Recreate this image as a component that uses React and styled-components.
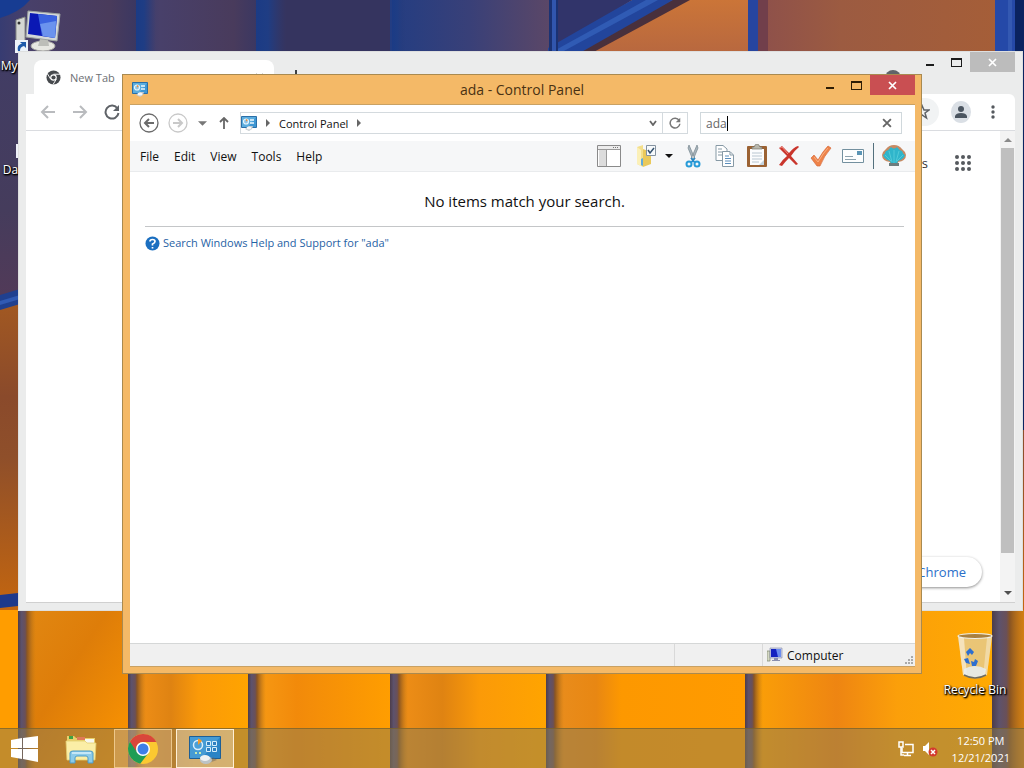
import React, { useState } from "react";
import styled, { createGlobalStyle, css } from "styled-components";

const GlobalStyle = createGlobalStyle`
  * {
    box-sizing: border-box;
  }

  body {
    margin: 0;
    font-family: "Open Sans", "Noto Sans", sans-serif;
    font-size: 12px;
    color: #111;
  }

  button,
  input {
    font: inherit;
    color: inherit;
    border: 0;
    padding: 0;
    margin: 0;
    background: none;
  }

  svg {
    display: block;
    flex: none;
  }
`;

/* ---------- desktop ---------- */

const Desktop = styled.div`
  position: relative;
  height: 100vh;
  overflow: hidden;
  display: flex;
  flex-direction: column;
  background: #3a3762;
`;

const Backdrop = styled.svg`
  position: absolute;
  width: 100%;
  height: 100%;
`;

const Shortcut = styled.button`
  position: absolute;
  width: 76px;
  display: flex;
  flex-direction: column;
  align-items: center;
  gap: 2px;
  line-height: 16px;
  white-space: nowrap;
  color: #fff;
  text-shadow: 1px 1px 2px #000, 0 1px 2px #000, 1px 1px 1px #000;
  left: ${(p) => p.$left || "auto"};
  right: ${(p) => p.$right || "auto"};
  top: ${(p) => p.$top || "auto"};
  bottom: ${(p) => p.$bottom || "auto"};
`;

/* ---------- window parts ---------- */

const CaptionButtons = styled.div`
  display: flex;
  align-items: flex-start;
`;

const CaptionButton = styled.button`
  width: 27px;
  height: 20px;
  display: flex;
  align-items: center;
  justify-content: center;
  color: ${(p) => p.$color || "#1b1b1b"};

  ${(p) =>
    p.$close &&
    css`
      width: 45px;
      color: #fff;
      background: ${p.$close};
    `}
`;

/* ---------- browser window ---------- */

const BrowserWindow = styled.section`
  position: absolute;
  inset: 51px 1px 157px 18px;
  display: flex;
  flex-direction: column;
  padding: 0 7px 7px;
  border: 1px solid #dedfdf;
  background: #ebecec;
`;

const TabStrip = styled.header`
  display: flex;
  align-items: flex-start;
  height: 42px;
  padding-left: 8px;
`;

const Tab = styled.div`
  display: flex;
  align-items: center;
  gap: 9px;
  width: 240px;
  height: 34px;
  margin-top: 8px;
  padding: 0 10px 0 12px;
  border-radius: 8px 8px 0 0;
  background: #fff;
  color: #6d7074;
  font-size: 11px;

  button {
    margin-left: auto;
  }
`;

const NewTabButton = styled.button`
  margin: 18px 0 0 16px;
`;

const TabSearch = styled.button`
  width: 16px;
  height: 16px;
  margin: 18px 15px 0 auto;
  border-radius: 50%;
  background: #5f6368;
`;

const BrowserBar = styled.div`
  display: flex;
  align-items: center;
  gap: 12px;
  height: 37px;
  padding: 0 12px;
  border-bottom: 1px solid #dadce0;
  border-radius: 0 6px 0 0;
  background: #fff;

  > button {
    width: 20px;
    display: flex;
    justify-content: center;
  }
`;

const Omnibox = styled.div`
  flex: 1;
  display: flex;
  align-items: center;
  justify-content: flex-end;
  height: 28px;
  padding-right: 9px;
  border-radius: 14px;
  background: #f1f3f4;
`;

const Avatar = styled.span`
  display: flex;
  align-items: center;
  justify-content: center;
  width: 22px;
  height: 22px;
  border-radius: 50%;
  background: #dadfe5;
`;

const BrowserPage = styled.main`
  flex: 1;
  min-height: 0;
  display: flex;
  background: #fff;
  border-bottom: 1px solid #d0d0d0;
`;

const NewTabPage = styled.div`
  flex: 1;
  display: flex;
  flex-direction: column;
  align-items: flex-end;
  justify-content: space-between;
  padding: 23px 18px 15px;
`;

const PageLinks = styled.nav`
  display: flex;
  align-items: center;
  gap: 26px;
  padding-right: 10px;
  font-size: 13px;

  a {
    color: #333;
    text-decoration: none;
  }
`;

const CustomizeButton = styled.button`
  height: 30px;
  padding: 0 16px 0 20px;
  border-radius: 15px;
  background: #fff;
  box-shadow: 0 1px 3px rgba(0, 0, 0, 0.45);
  color: #2b6fc9;
  font-size: 13px;
`;

const ScrollBar = styled.div`
  width: 15px;
  display: flex;
  flex-direction: column;
  align-items: center;
  justify-content: space-between;
  padding: 5px 0;
  gap: 4px;
  background: #f3f3f3;
`;

const ScrollThumb = styled.div`
  flex: 1;
  width: 13px;
  margin-bottom: 32px;
  background: #bfbfbf;
`;

/* ---------- control panel window ---------- */

const PanelWindow = styled.section`
  position: absolute;
  inset: 74px 102px 94px 122px;
  display: flex;
  flex-direction: column;
  padding: 0 6px 6px 7px;
  border: 1px solid #a98a50;
  background: #f4b967;
`;

const TitleBar = styled.header`
  display: flex;
  justify-content: space-between;
  height: 29px;

  > svg {
    margin: 6px 0 0 2px;
  }
`;

const Title = styled.h1`
  flex: 1;
  margin: 0 0 0 80px;
  font-size: 14px;
  font-weight: 400;
  line-height: 29px;
  text-align: center;
  color: #4a3213;
`;

const PanelBody = styled.div`
  flex: 1;
  min-height: 0;
  display: flex;
  flex-direction: column;
  border: 1px solid #c9a163;
  border-width: 1px 0;
  background: #fff;
`;

const NavRow = styled.div`
  display: flex;
  align-items: center;
  height: 36px;
  padding: 0 13px 0 8px;
`;

const NavButton = styled.button`
  display: flex;
  align-items: center;
  justify-content: center;
  width: ${(p) => p.$width || 22}px;
  height: 22px;
  color: #6f6f6f;
`;

const AddressBar = styled.div`
  flex: 1;
  display: flex;
  align-items: center;
  height: 22px;
  margin-right: 12px;
  border: 1px solid #d4dade;
`;

const Crumbs = styled.div`
  flex: 1;
  display: flex;
  align-items: center;
  gap: 7px;
  font-size: 11px;
`;

const RefreshButton = styled(NavButton)`
  border-left: 1px solid #d4dade;
`;

const SearchBox = styled.label`
  display: flex;
  align-items: center;
  width: 202px;
  height: 22px;
  padding: 0 9px 0 5px;
  border: 1px solid #d0d8dc;
  color: #666;

  input {
    field-sizing: content;
    max-width: 160px;
    outline: none;
    caret-color: transparent;
  }

  button {
    margin-left: auto;
  }
`;

const Caret = styled.span`
  width: 1px;
  height: 15px;
  background: #000;
`;

const MenuRow = styled.div`
  display: flex;
  align-items: center;
  justify-content: space-between;
  height: 31px;
  padding: 0 9px 0 3px;
  border-bottom: 1px solid #e9ebed;
  background: #f6f7f8;
`;

const Menu = styled.nav`
  display: flex;
  gap: 1px;

  button {
    padding: 0 7px;
  }
`;

const Toolbar = styled.div`
  display: flex;
  align-items: center;
  gap: 8px;
`;

const Tool = styled.button`
  display: flex;
  align-items: center;
  justify-content: center;
  width: 24px;
  height: 26px;
`;

const SplitTool = styled.div`
  display: flex;
  align-items: center;
  gap: 7px;
  padding-left: 5px;
`;

const LastTool = styled.div`
  padding-left: 8px;
  border-left: 1px solid #53707d;
`;

const Results = styled.main`
  flex: 1;
  padding: 16px 11px 0 15px;
`;

const EmptyMessage = styled.p`
  margin: 0;
  padding-bottom: 12px;
  border-bottom: 1px solid #c4c6c8;
  font-size: 15px;
  line-height: 26px;
  text-align: center;
`;

const HelpLink = styled.a`
  display: inline-flex;
  align-items: center;
  gap: 3px;
  margin-top: 8px;
  font-size: 11px;
  line-height: 16px;
  color: #1f62a5;
  text-decoration: none;
`;

const StatusBar = styled.footer`
  display: flex;
  height: 23px;
  border-top: 1px solid #d5d7d7;
  background: #f0f0f0;
`;

const StatusCell = styled.div`
  display: flex;
  align-items: center;
  gap: 4px;
  width: ${(p) => (p.$width ? `${p.$width}px` : "auto")};
  flex: ${(p) => (p.$width ? "none" : 1)};
  padding: 0 1px 0 4px;
  border-left: ${(p) => (p.$width ? "1px solid #d9d9d9" : "0")};

  svg:last-child:not(:first-child) {
    margin: auto 0 1px auto;
  }
`;

/* ---------- taskbar ---------- */

const Taskbar = styled.footer`
  position: relative;
  display: flex;
  align-items: stretch;
  gap: 4px;
  height: 40px;
  margin-top: auto;
  padding-right: 14px;
  border-top: 1px solid rgba(120, 95, 40, 0.7);
  background: rgba(137, 123, 83, 0.5);
`;

const TaskButton = styled.button`
  display: flex;
  align-items: center;
  justify-content: center;
  width: ${(p) => (p.$start ? 48 : 58)}px;
  border: 1px solid transparent;

  ${(p) =>
    p.$open &&
    css`
      border-color: rgba(255, 225, 170, 0.65);
      background: rgba(230, 190, 140, 0.35);
    `}

  ${(p) =>
    p.$active &&
    css`
      border-color: #fff0d6;
      background: rgba(225, 205, 170, 0.55);
    `}
`;

const Tray = styled.div`
  display: flex;
  align-items: center;
  gap: 8px;
  margin-left: auto;
`;

const Clock = styled.time`
  margin-left: 6px;
  font-size: 11px;
  line-height: 17px;
  text-align: center;
  white-space: pre-line;
  color: #fff;
`;

/* ---------- drawings ---------- */

const seams = [18, 128, 248, 390, 546, 745];

const Wallpaper = () => (
  <Backdrop viewBox="0 0 1024 768" preserveAspectRatio="none" aria-hidden="true">
    <defs>
      <linearGradient id="night" x1="0" x2="1" y1="0" y2="0">
        <stop offset="0" stopColor="#373c72" />
        <stop offset=".2" stopColor="#48406a" />
        <stop offset=".8" stopColor="#493b5c" />
        <stop offset="1" stopColor="#3a3762" />
      </linearGradient>
      <linearGradient id="dusk" x1="0" x2="1" y1="0" y2="0">
        <stop offset="0" stopColor="#233d82" />
        <stop offset=".5" stopColor="#394078" />
        <stop offset="1" stopColor="#5b4767" />
      </linearGradient>
      <linearGradient id="blueEdge" x1="0" x2="1" y1="0" y2="0">
        <stop offset="0" stopColor="#1b3b85" />
        <stop offset=".4" stopColor="#1f3d84" />
        <stop offset="1" stopColor="#2a3b78" stopOpacity="0" />
      </linearGradient>
      <linearGradient id="copper" x1="0" x2="1" y1="0" y2="0">
        <stop offset="0" stopColor="#8d504b" />
        <stop offset=".35" stopColor="#9c5b41" />
        <stop offset="1" stopColor="#a55e38" />
      </linearGradient>
      <linearGradient id="amber" x1="0" x2="0" y1="0" y2="1">
        <stop offset="0" stopColor="#cb7538" />
        <stop offset="1" stopColor="#b56640" />
      </linearGradient>
      <linearGradient id="leftNight" x1="0" x2="0" y1="0" y2="1">
        <stop offset="0" stopColor="#403d68" />
        <stop offset=".7" stopColor="#453c5c" />
        <stop offset="1" stopColor="#523a58" />
      </linearGradient>
      <linearGradient id="side" x1="0" x2="0" y1="0" y2="1">
        <stop offset=".5" stopColor="#a15822" />
        <stop offset=".65" stopColor="#8a4a2b" />
        <stop offset=".75" stopColor="#8f4f2a" />
        <stop offset="1" stopColor="#c4660f" />
      </linearGradient>
      <linearGradient id="panelA" x1="0" x2="1" y1="0" y2="1">
        <stop offset="0" stopColor="#e18712" />
        <stop offset=".4" stopColor="#de7d09" />
        <stop offset="1" stopColor="#fd9600" />
      </linearGradient>
      <linearGradient id="panelB" x1="0" x2="1" y1="0" y2="0">
        <stop offset="0" stopColor="#f08f17" />
        <stop offset=".3" stopColor="#df8312" />
        <stop offset=".55" stopColor="#fb9a08" />
        <stop offset="1" stopColor="#ffa400" />
      </linearGradient>
      <linearGradient id="panelC" x1="0" x2="1" y1="0" y2="0">
        <stop offset="0" stopColor="#fba007" />
        <stop offset=".35" stopColor="#ee8512" />
        <stop offset=".6" stopColor="#fb9f0a" />
        <stop offset="1" stopColor="#ffaa02" />
      </linearGradient>
      <linearGradient id="panelD" x1="0" x2="1" y1="0" y2="0">
        <stop offset="0" stopColor="#f79a14" />
        <stop offset=".3" stopColor="#f28a0a" />
        <stop offset="1" stopColor="#ff9e00" />
      </linearGradient>
      <linearGradient id="panelE" x1="0" x2="1" y1="0" y2="0">
        <stop offset="0" stopColor="#e98d1d" />
        <stop offset=".22" stopColor="#e88713" />
        <stop offset=".35" stopColor="#fd9800" />
        <stop offset="1" stopColor="#ff9b00" />
      </linearGradient>
      <linearGradient id="seam" x1="0" x2="1" y1="0" y2="0">
        <stop offset="0" stopColor="#4d3d4a" />
        <stop offset=".2" stopColor="#5d526c" />
        <stop offset=".4" stopColor="#6a5058" />
        <stop offset=".5" stopColor="#8a5522" />
        <stop offset="1" stopColor="#c57b13" stopOpacity="0" />
      </linearGradient>
    </defs>

    <rect width="1024" height="610" fill="url(#side)" />
    <rect width="18" height="300" fill="url(#leftNight)" />
    <rect width="138" height="60" fill="url(#night)" />
    <path d="M0 0H30Q20 12 0 18z" fill="#173c92" />
    <rect x="136" width="122" height="60" fill="url(#night)" />
    <rect x="136" width="20" height="60" fill="url(#blueEdge)" />
    <rect x="256" width="140" height="60" fill="#35345f" />
    <rect x="256" width="30" height="60" fill="url(#blueEdge)" />
    <rect x="390" width="160" height="60" fill="url(#dusk)" />
    <rect x="392" width="14" height="60" fill="url(#blueEdge)" />
    <rect x="550" width="200" height="60" fill="url(#amber)" />
    <path d="M550 0H632L550 52z" fill="#31346a" />
    <path d="M672 0H690L590 54H572z" fill="#49303c" />
    <path d="M632 0H673L578 54H548V48z" fill="#22459c" />
    <path d="M646 0H658L562 52H552z" fill="#305bb4" />
    <rect x="549" width="9" height="52" fill="#1a3273" />
    <rect x="552" width="4" height="52" fill="#3156ad" />
    <rect x="757" width="240" height="60" fill="url(#copper)" />
    <rect x="748" width="10" height="60" fill="#2645a0" />
    <rect x="758" width="10" height="60" fill="#713f4b" />
    <rect x="995" width="20" height="60" fill="#2549a8" />
    <rect x="1008" width="4" height="60" fill="#3459b2" />
    <rect x="1015" width="9" height="430" fill="#0a2360" />
    <path d="M0 295L20 289V304L0 310z" fill="#20408f" />
    <path d="M0 301L20 295V299L0 305z" fill="#315ab3" />
    <path d="M0 595L18 593V606L0 608z" fill="#1e398b" />

    <rect y="610" width="1024" height="158" fill="#ff9d00" />
    <rect x="28" y="610" width="100" height="158" fill="url(#panelA)" />
    <rect x="138" y="610" width="110" height="158" fill="url(#panelB)" />
    <rect x="256" y="610" width="136" height="158" fill="url(#panelD)" />
    <rect x="398" y="610" width="148" height="158" fill="url(#panelB)" />
    <rect x="554" y="610" width="192" height="158" fill="url(#panelE)" />
    <rect x="753" y="610" width="240" height="158" fill="url(#panelC)" />
    {seams.map((x) => (
      <rect key={x} x={x} y="610" width="18" height="158" fill="url(#seam)" />
    ))}
    <rect x="992" y="610" width="32" height="158" fill="#d98213" />
    <rect x="992" y="610" width="36" height="158" fill="url(#seam)" />
  </Backdrop>
);

const CloseMark = ({ size = 9 }) => (
  <svg width={size} height={size} viewBox="0 0 9 9" stroke="currentColor" strokeWidth="1.7">
    <path d="M1 1L8 8M8 1L1 8" />
  </svg>
);

const Triangle = ({ dir = "down", color = "#666", size = 8 }) => {
  const d = { down: "M0 2H8L4 6z", up: "M0 6H8L4 2z", right: "M2 0V8L6 4z" }[dir];
  return (
    <svg width={size} height={size} viewBox="0 0 8 8" fill={color}>
      <path d={d} />
    </svg>
  );
};

const Caption = ({ color, close }) => (
  <CaptionButtons>
    <CaptionButton $color={color} aria-label="Minimize">
      <svg width="10" height="10" viewBox="0 0 10 10" fill="currentColor">
        <path d="M1 7H9V9H1z" />
      </svg>
    </CaptionButton>
    <CaptionButton $color={color} aria-label="Maximize">
      <svg width="11" height="9" viewBox="0 0 11 9" fill="currentColor">
        <path fillRule="evenodd" d="M0 0H11V9H0zM1 2V8H10V2z" />
      </svg>
    </CaptionButton>
    <CaptionButton $close={close} aria-label="Close">
      <CloseMark />
    </CaptionButton>
  </CaptionButtons>
);

const PanelIcon = () => (
  <svg width="16" height="16" viewBox="0 0 16 16">
    <path d="M.5 1.500H15.500V12.500H.5z" fill="#3f97d3" stroke="#2a6fa8" />
    <path d="M1 2H15L7 12H1z" fill="#6fbce6" opacity=".6" />
    <circle cx="5" cy="6.500" r="2.500" fill="#8fc3e4" stroke="#e9f6fd" strokeWidth="1.200" />
    <path d="M5 6.500V4L7 5z" fill="#ee8d3a" />
    <path d="M9 5H13M9 8H13" stroke="#eaf6fd" strokeWidth="1.500" />
    <path d="M4 14L8 11H12L11 14L8 16z" fill="#c3c9cc" />
    <ellipse cx="8" cy="13" rx="2.500" ry="1.500" fill="#f4f6f7" />
  </svg>
);

const LargePanelIcon = () => (
  <svg width="34" height="32" viewBox="0 0 34 32">
    <path d="M1.500 3.500H32.500V25.500H1.500z" fill="#2b84c6" stroke="#1d5f96" />
    <path d="M2 4H32L14 25H2z" fill="#5fb2e2" opacity=".5" />
    <circle cx="10" cy="12" r="4.500" fill="#4ba0d8" stroke="#dceffa" strokeWidth="1.500" />
    <path d="M10 12V5.500A6 6 0 0 1 14 8z" fill="#f39a2c" />
    <path d="M18.500 8.500H22.500V12.500H18.500zM24.500 8.500H28.500V12.500H24.500zM18.500 14.500H22.500V18.500H18.500zM24.500 14.500H28.500V18.500H24.500z" fill="#2f7fc0" stroke="#d6eefb" />
    <path d="M7 19H9V21H7zM11 19H13V21H11z" fill="#c9ecb0" />
    <path d="M18 31L29 27L25 24z" fill="#6e655c" opacity=".5" />
    <ellipse cx="18" cy="27" rx="6" ry="4" fill="#bcc3c5" />
    <ellipse cx="17" cy="25" rx="5" ry="3" fill="#eef1f2" />
  </svg>
);

const ComputerIcon = () => (
  <svg width="48" height="46" viewBox="0 0 48 46">
    <path d="M1 10L10 7V34L1 36z" fill="#d5d7d3" stroke="#878985" />
    <circle cx="4" cy="13" r="1.500" fill="#333" />
    <ellipse cx="28" cy="36" rx="12" ry="5" fill="#e7e7e2" stroke="#a9a9a4" />
    <path d="M25 29H33L34 36H23z" fill="#bdbeb9" />
    <path d="M13 1L45 4L42 31L11 27z" fill="#d3d8da" stroke="#9da39f" />
    <path d="M15 3L42 6L40 28L13 24z" fill="#0a18b4" />
    <path d="M23 4L42 6L40 28L27 26z" fill="#3a62e0" />
    <path d="M25 14L41 11L40 28L28 26z" fill="#8cb4f7" opacity=".6" />
    <path d="M0 30H13V43H0z" fill="#eef4fa" />
    <path d="M3 41C2 36 4 34 7 34L5 32H11V38L9 36C6 37 5 38 5 41z" fill="#1f5cab" />
  </svg>
);

const BinIcon = () => (
  <svg width="38" height="48" viewBox="0 0 38 48">
    <path d="M2 4H36L31 43Q19 50 7 43z" fill="#e3cf9c" opacity=".75" />
    <path d="M2 4L7 43L11 45L8 6z" fill="#fff" opacity=".5" />
    <path d="M36 4L31 43L27 45L31 6z" fill="#fff" opacity=".35" />
    <ellipse cx="19" cy="4" rx="17" ry="2.500" fill="#a9803f" stroke="#f0f0e8" strokeWidth="1.200" />
    <path d="M10 20L14 16L18 20L16 23L14 21L12 24zM8 27L12 26L14 32L10 31zM16 34L15 29L18 30L19 27L22 29L20 34z" fill="#2e6fd0" />
    <path d="M8 37Q19 31 30 37L29 43Q19 49 8 43z" fill="#e6edf3" opacity=".85" />
    <path d="M8 43Q19 49 30 43" fill="none" stroke="#6f6b5d" strokeWidth="1.500" />
  </svg>
);

const ChromeLogo = ({ size = 32, mono }) => (
  <svg width={size} height={size} viewBox="0 0 32 32">
    <circle cx="16" cy="16" r="15" fill={mono || "#fbc931"} />
    {!mono && (
      <>
        <path d="M16 16H9.900L3 8.500A15 15 0 0 0 13.200 30.700L21.500 20z" fill="#1f9d55" />
        <path d="M16 9H29.300A15 15 0 0 0 3 8.500L10 19.500A7 7 0 0 1 16 9z" fill="#d9463b" />
      </>
    )}
    {mono && <path d="M16 9H30M10 19.500L3 8M22 19.500L15 31" stroke="#fff" strokeWidth="2" />}
    <circle cx="16" cy="16" r="7" fill="#fff" />
    <circle cx="16" cy="16" r={mono ? 4.5 : 5.5} fill={mono || "#3f7fe8"} />
  </svg>
);

const Arrow = ({ flip, color, size = 16 }) => (
  <svg width={size} height={size} viewBox="0 0 16 16" fill="none" stroke={color} strokeWidth="2">
    <path d={flip ? "M1 8H14M8 2L14 8L8 14" : "M15 8H2M8 2L2 8L8 14"} />
  </svg>
);

const Reload = ({ size = 16, color = "#5f6368" }) => (
  <svg width={size} height={size} viewBox="0 0 16 16" fill="none" stroke={color} strokeWidth="2">
    <path d="M13.500 4.500A6.500 6.500 0 1 0 14.500 9" />
    <path d="M15 1V7H9z" fill={color} stroke="none" />
  </svg>
);

const RoundArrow = ({ flip, color }) => (
  <svg width="20" height="20" viewBox="0 0 20 20" fill="none" stroke={color}>
    <circle cx="10" cy="10" r="9" strokeWidth="1.300" />
    <path strokeWidth="2" d={flip ? "M5 10H14M10 6L14 10L10 14" : "M15 10H6M10 6L6 10L10 14"} />
  </svg>
);

const tools = [
  {
    name: "Cut",
    icon: (
      <svg width="18" height="24" viewBox="0 0 18 24" fill="none">
        <path d="M5 1L11 15L9 16L4 4zM13 1L7 15L9 16L14 4z" fill="#a9b5bc" stroke="#75858e" strokeWidth=".7" />
        <path d="M7 14L9 16L7 19M11 14L9 16L11 19" stroke="#2389c9" strokeWidth="1.500" />
        <circle cx="5" cy="20" r="2.500" stroke="#279bd8" strokeWidth="2" />
        <circle cx="13" cy="20" r="2.500" stroke="#279bd8" strokeWidth="2" />
      </svg>
    ),
  },
  {
    name: "Copy",
    icon: (
      <svg width="20" height="24" viewBox="0 0 20 24" stroke="#8699a5">
        <path d="M1 1.500H8L12 5V16.500H1z" fill="#fff" />
        <path d="M3 5H7M3 8H8M3 11H8" />
        <path d="M7.500 7.500H15L18.500 11V22.500H7.500z" fill="#fff" />
        <path d="M15 8V11H18" fill="none" />
        <path d="M10 12H14M10 14.500H16M10 17H16M10 19.500H16" stroke="#5a8dbb" />
      </svg>
    ),
  },
  {
    name: "Paste",
    icon: (
      <svg width="20" height="24" viewBox="0 0 20 24">
        <rect x="0" y="2" width="20" height="21" rx="1" fill="#9b6233" />
        <path d="M3 5H17V21H3z" fill="#fbfcfd" />
        <path d="M5 9H15M5 12H15M5 15H15M5 18H12" stroke="#b9c6d0" />
        <path d="M5 3H7Q8 0 10 0T13 3H15V5H5z" fill="#b8b7ac" stroke="#77766c" strokeWidth=".7" />
        <path d="M12 21L17 16V21z" fill="#c3d3df" />
      </svg>
    ),
  },
  {
    name: "Delete",
    icon: (
      <svg width="22" height="22" viewBox="0 0 22 22">
        <path d="M1 3L4 1L11 8Q16 2 20 1L21 2Q16 6 13 11L20 19L18 20L11 13Q7 17 4 21L1 20Q4 15 9 11z" fill="#c9352c" />
        <path d="M2 3L4 2L10 9" fill="none" stroke="#f0887c" />
      </svg>
    ),
  },
  {
    name: "Properties",
    icon: (
      <svg width="22" height="22" viewBox="0 0 22 22">
        <path d="M1 13L4 10L8 15Q13 6 18 1L21 3Q14 11 10 21H7z" fill="#ee8349" stroke="#d96a3b" strokeWidth=".7" />
        <path d="M4 12L8 17Q13 8 18 3" fill="none" stroke="#f8b083" />
      </svg>
    ),
  },
  {
    name: "Mail",
    icon: (
      <svg width="24" height="16" viewBox="0 0 24 16">
        <path d="M1.500 1.500H22.500V14.500H1.500z" fill="#fdfefe" stroke="#73909f" />
        <path d="M4 8.500H12M4 11.500H15" stroke="#8ca1ad" />
        <path d="M16 3H21V7H16z" fill="#5b95b5" />
      </svg>
    ),
  },
];

const ShellIcon = () => (
  <svg width="24" height="22" viewBox="0 0 24 22">
    <path d="M7 21L8 17Q0 16 0 10Q1 6 4 4Q7 0 12 0T20 4Q23 6 24 10Q24 16 16 17L17 21z" fill="#c78a63" />
    <path d="M9 19L8 16Q2 14 1 10Q3 9 4 6Q7 5 9 2Q12 5 15 2Q17 5 20 6Q21 9 23 10Q22 14 16 16L15 19z" fill="#2fb5cb" />
    <path d="M12 18V5M10 17L7 6M14 17L17 6M9 16L3 10M15 16L21 10" stroke="#5ccfda" strokeWidth=".8" fill="none" />
    <path d="M7 18H17V21H7z" fill="#6d7c7d" />
  </svg>
);

const MiniComputer = () => (
  <svg width="16" height="16" viewBox="0 0 16 16">
    <path d="M0 4H3V14H0z" fill="#d4d8c4" stroke="#7c846f" strokeWidth=".7" />
    <path d="M3 1H15V11H3z" fill="#cfd3e8" stroke="#8086a9" strokeWidth=".6" />
    <path d="M4 2H14V10H4z" fill="#1422c0" />
    <path d="M9 2H14V10H11z" fill="#6b8df0" />
    <path d="M7 11H11V13H13V14H5V13H7z" fill="#8a8fb0" />
  </svg>
);

const FolderIcon = () => (
  <svg width="32" height="32" viewBox="0 0 32 32">
    <path d="M2 3H9L11 5H30V26H2z" fill="#e8cf6b" />
    <path d="M4 3H8V6H4z" fill="#3fa143" />
    <path d="M12 4H20V7H12z" fill="#e07a58" />
    <path d="M20 6H29V10H20z" fill="#f8f8ee" />
    <path d="M1 8H20L22 10H31L30 27H2z" fill="#fbeea6" stroke="#e5cf72" strokeWidth=".8" />
    <path d="M5 20Q5 18 8 18H25Q28 18 28 20V30H23V25Q23 23 21 23H12Q10 23 10 25V30H5z" fill="#8ccbe9" stroke="#4c9bc8" />
    <path d="M7 20H26" stroke="#d8f0fb" strokeWidth="1.500" />
  </svg>
);

/* ---------- windows ---------- */

const Browser = () => (
  <BrowserWindow aria-label="New Tab">
    <TabStrip>
      <Tab>
        <ChromeLogo size={15} mono="#46494d" />
        <span>New Tab</span>
        <button aria-label="Close tab">
          <CloseMark />
        </button>
      </Tab>
      <NewTabButton aria-label="New tab">
        <svg width="12" height="12" viewBox="0 0 12 12" stroke="#3c4043" strokeWidth="2">
          <path d="M6 0V12M0 6H12" />
        </svg>
      </NewTabButton>
      <TabSearch aria-label="Search tabs" />
      <Caption close="#bcbcbc" />
    </TabStrip>
    <BrowserBar>
      <button aria-label="Back">
        <Arrow color="#b9bbbe" />
      </button>
      <button aria-label="Forward">
        <Arrow flip color="#b9bbbe" />
      </button>
      <button aria-label="Reload">
        <Reload />
      </button>
      <Omnibox>
        <svg width="16" height="16" viewBox="0 0 16 16" fill="none" stroke="#5f6368" strokeWidth="1.500">
          <path d="M8 1.500L10 6H15L11 9L12.500 14L8 11L3.500 14L5 9L1 6H6z" />
        </svg>
      </Omnibox>
      <button aria-label="Profile">
        <Avatar>
          <svg width="12" height="12" viewBox="0 0 12 12" fill="#4b5560">
            <circle cx="6" cy="3" r="3" />
            <path d="M0 12V10Q1 7 6 7T12 10V12z" />
          </svg>
        </Avatar>
      </button>
      <button aria-label="Menu">
        <svg width="4" height="14" viewBox="0 0 4 14" fill="#55595e">
          <circle cx="2" cy="2" r="1.700" />
          <circle cx="2" cy="7" r="1.700" />
          <circle cx="2" cy="12" r="1.700" />
        </svg>
      </button>
    </BrowserBar>
    <BrowserPage>
      <NewTabPage>
        <PageLinks>
          <a href="#images">Images</a>
          <button aria-label="Apps">
            <svg width="18" height="18" viewBox="0 0 18 18" fill="#55595e">
              {[3, 9, 15].map((y) => [3, 9, 15].map((x) => <circle key={`${x}-${y}`} cx={x} cy={y} r="2" />))}
            </svg>
          </button>
        </PageLinks>
        <CustomizeButton>Customize Chrome</CustomizeButton>
      </NewTabPage>
      <ScrollBar>
        <Triangle dir="up" color="#8a8a8a" />
        <ScrollThumb />
        <Triangle color="#505050" />
      </ScrollBar>
    </BrowserPage>
  </BrowserWindow>
);

const ControlPanel = () => {
  const [query, setQuery] = useState("ada");

  return (
    <PanelWindow aria-label="Control Panel">
      <TitleBar>
        <PanelIcon />
        <Title>ada - Control Panel</Title>
        <Caption color="#2e1d05" close="#c94f52" />
      </TitleBar>
      <PanelBody>
        <NavRow>
          <NavButton aria-label="Back">
            <RoundArrow color="#6b6b6b" />
          </NavButton>
          <NavButton $width={36} aria-label="Forward">
            <RoundArrow flip color="#c9c9c9" />
          </NavButton>
          <NavButton $width={12} aria-label="Recent locations">
            <Triangle color="#777" size={9} />
          </NavButton>
          <NavButton $width={32} aria-label="Up">
            <svg width="10" height="12" viewBox="0 0 10 12" fill="none" stroke="#666" strokeWidth="1.800">
              <path d="M5 12V1M1 5L5 1L9 5" />
            </svg>
          </NavButton>
          <AddressBar>
            <Crumbs>
              <PanelIcon />
              <Triangle dir="right" />
              <span>Control Panel</span>
              <Triangle dir="right" />
            </Crumbs>
            <NavButton $width={18} aria-label="Previous locations">
              <svg width="8" height="6" viewBox="0 0 8 6" fill="none" stroke="#666" strokeWidth="1.800">
                <path d="M1 1L4 5L7 1" />
              </svg>
            </NavButton>
            <RefreshButton $width={25} aria-label="Refresh">
              <Reload size={12} color="#777" />
            </RefreshButton>
          </AddressBar>
          <SearchBox>
            <input aria-label="Search Control Panel" value={query} onChange={(e) => setQuery(e.target.value)} />
            <Caret />
            <button aria-label="Clear search" onClick={() => setQuery("")}>
              <CloseMark size={10} />
            </button>
          </SearchBox>
        </NavRow>
        <MenuRow>
          <Menu>
            {["File", "Edit", "View", "Tools", "Help"].map((item) => (
              <button key={item}>{item}</button>
            ))}
          </Menu>
          <Toolbar>
            <Tool aria-label="Navigation pane">
              <svg width="24" height="22" viewBox="0 0 24 22">
                <path d="M.5.500H23.500V21.500H.5z" fill="#fff" stroke="#8a8a8a" />
                <path d="M1 1H23V4H1z" fill="#ececec" />
                <path d="M2 5H9V21H2z" fill="#dcdcdc" />
                <path d="M1 4.500H23M9.500 5V21" stroke="#999" />
                <path d="M16 2.500H17M18 2.500H19M20 2.500H21" stroke="#777" />
              </svg>
            </Tool>
            <SplitTool>
              <Tool aria-label="Folder options">
                <svg width="22" height="24" viewBox="0 0 22 24">
                  <path d="M2 3L8 1V23L2 20z" fill="#f4df8b" />
                  <path d="M8 5L16 8V20L8 23z" fill="#eac95a" />
                  <path d="M2 3L6 6V22L2 20z" fill="#fbf0b8" />
                  <path d="M6 15L8 14V22L6 21z" fill="#63abdb" />
                  <path d="M11.500 1.500H20.500V11.500H11.500z" fill="#f7fafc" stroke="#8593a0" />
                  <path d="M13 6L15 9L19 4" fill="none" stroke="#33506c" strokeWidth="1.500" />
                </svg>
              </Tool>
              <button aria-label="More options">
                <Triangle color="#111" />
              </button>
            </SplitTool>
            {tools.map(({ name, icon }) => (
              <Tool key={name} aria-label={name}>
                {icon}
              </Tool>
            ))}
            <LastTool>
              <Tool aria-label="Classic Shell">
                <ShellIcon />
              </Tool>
            </LastTool>
          </Toolbar>
        </MenuRow>
        <Results>
          <EmptyMessage>No items match your search.</EmptyMessage>
          <HelpLink href="#help">
            <svg width="15" height="15" viewBox="0 0 15 15">
              <circle cx="7.500" cy="7.500" r="7" fill="#1b6fc0" />
              <path d="M5 5.500Q5 3.500 7.500 3.500T10 5.500Q10 7 7.500 8V9.500M7.500 11V12.500" fill="none" stroke="#fff" strokeWidth="1.700" />
            </svg>
            Search Windows Help and Support for "ada"
          </HelpLink>
        </Results>
        <StatusBar>
          <StatusCell />
          <StatusCell $width={88} />
          <StatusCell $width={153}>
            <MiniComputer />
            <span>Computer</span>
            <svg width="9" height="9" viewBox="0 0 9 9" fill="#aaa">
              <path d="M6 0H8V2H6zM3 3H5V5H3zM6 3H8V5H6zM0 6H2V8H0zM3 6H5V8H3zM6 6H8V8H6z" />
            </svg>
          </StatusCell>
        </StatusBar>
      </PanelBody>
    </PanelWindow>
  );
};

const App = () => {
  return (
    <>
      <GlobalStyle />
      <Desktop>
        <Wallpaper />
        <Shortcut $left="1px" $top="10px">
          <ComputerIcon />
          My Computer
        </Shortcut>
        <Shortcut $left="1px" $top="114px">
          <svg width="46" height="46" viewBox="0 0 46 46">
            <path d="M0 30H14V44H0z" fill="#eef0f8" />
          </svg>
          Data Storage
        </Shortcut>
        <Shortcut $right="11px" $bottom="70px">
          <BinIcon />
          Recycle Bin
        </Shortcut>
        <Browser />
        <ControlPanel />
        <Taskbar>
          <TaskButton $start aria-label="Start">
            <svg width="27" height="26" viewBox="0 0 27 26" fill="#fff">
              <path d="M0 4L11 2V12H0zM12 2L27 0V12H12zM0 13H11V23L0 21zM12 13H27V26L12 23z" />
            </svg>
          </TaskButton>
          <TaskButton aria-label="File Explorer">
            <FolderIcon />
          </TaskButton>
          <TaskButton $open aria-label="Google Chrome">
            <ChromeLogo />
          </TaskButton>
          <TaskButton $active aria-label="Control Panel">
            <LargePanelIcon />
          </TaskButton>
          <Tray>
            <svg width="16" height="16" viewBox="0 0 16 16" fill="none" stroke="#fff" strokeWidth="1.500">
              <path d="M7 3.500H15V11.500H4V7M9.500 12V14.500M6 14.500H13" />
              <path d="M1 1H5V6H1zM3 6V14H6" />
            </svg>
            <svg width="16" height="16" viewBox="0 0 16 16">
              <path d="M1 5H3L7 1V14L3 10H1z" fill="#fff" />
              <circle cx="11" cy="11" r="4.500" fill="#d33a2e" />
              <path d="M9 9L13 13M13 9L9 13" stroke="#fff" strokeWidth="1.500" />
            </svg>
            <Clock>{"12:50 PM\n12/21/2021"}</Clock>
          </Tray>
        </Taskbar>
      </Desktop>
    </>
  );
};

export default App;
